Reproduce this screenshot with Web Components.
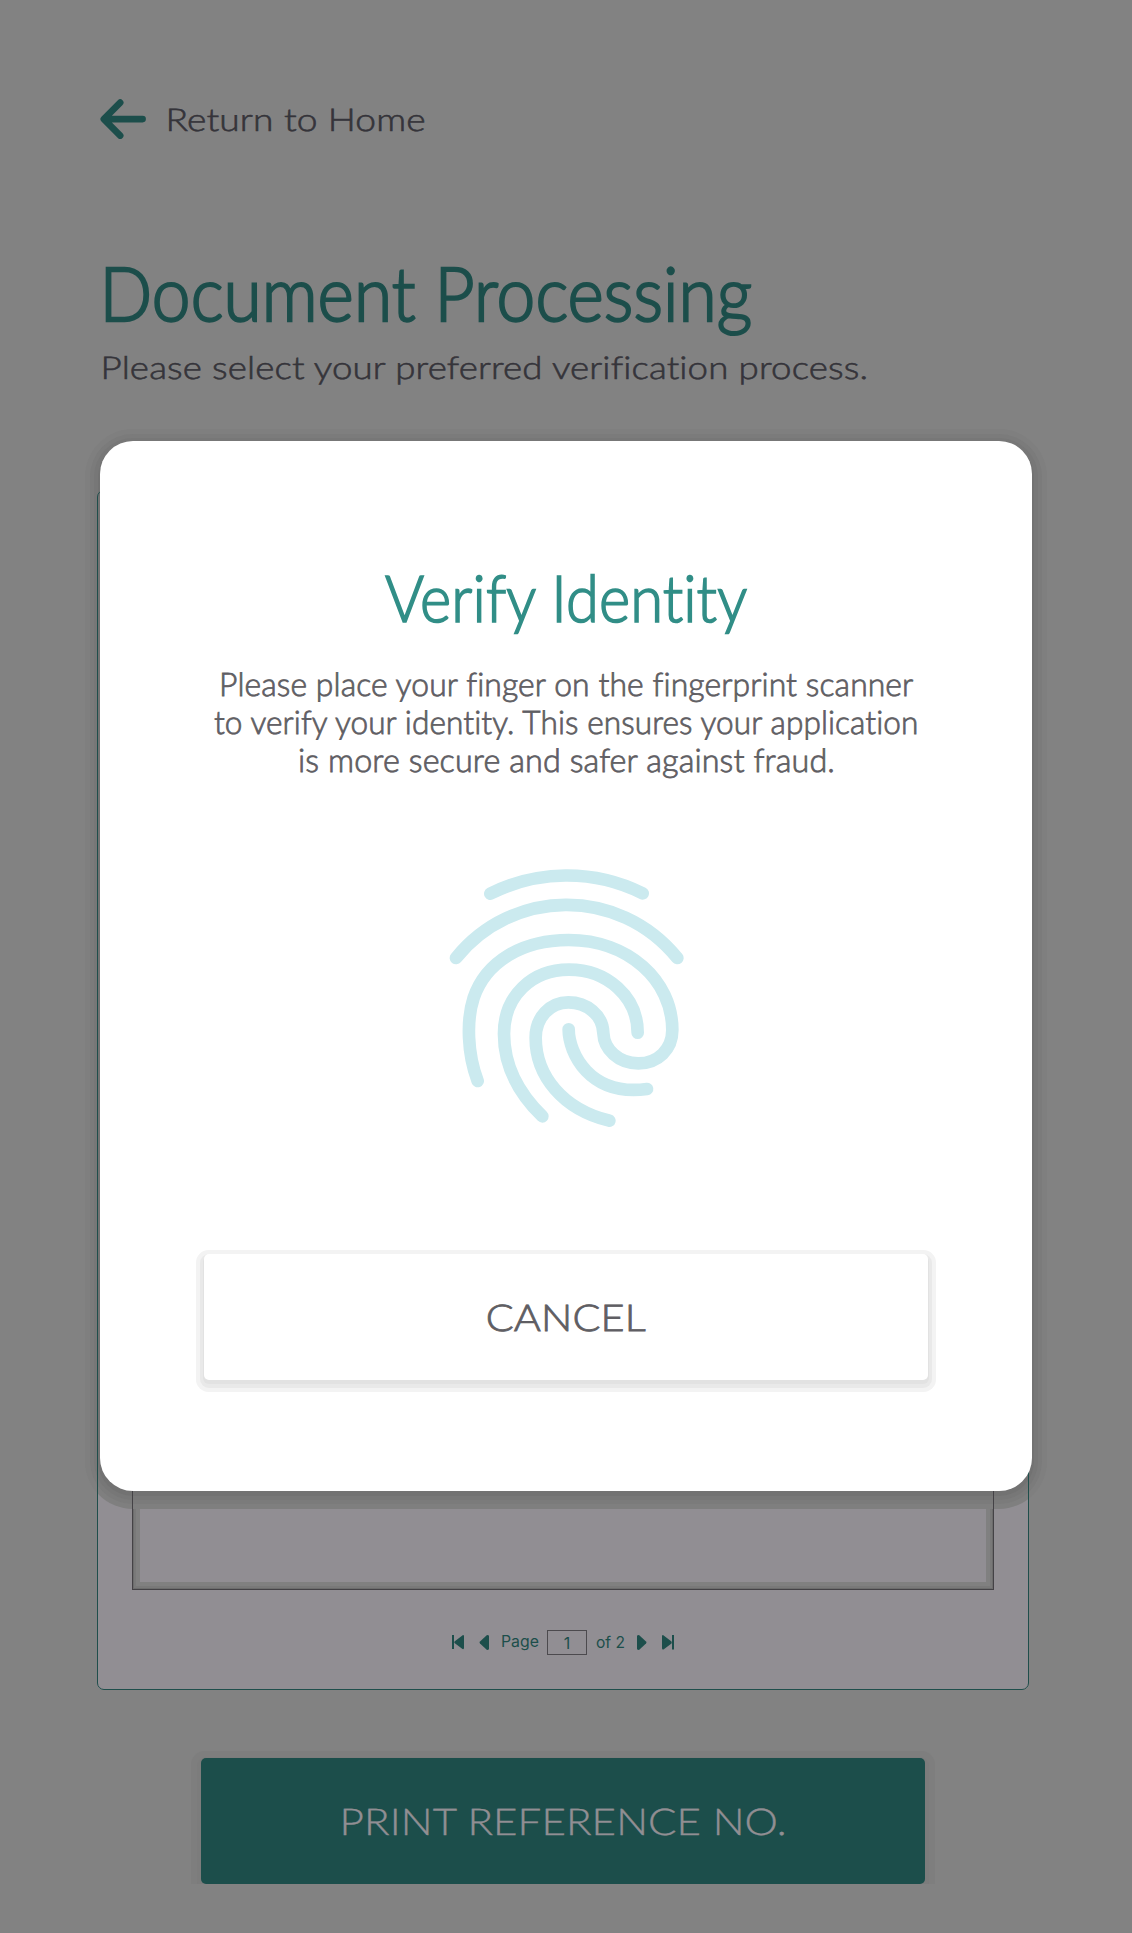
<!DOCTYPE html>
<html lang="en">
<head>
<meta charset="utf-8">
<title>Document Processing</title>
<style>
html,body{margin:0;background:#828282;font-family:Lato,"Open Sans",sans-serif}
</style>
</head>
<body>
<kiosk-page>
  <verify-dialog slot="dialog"></verify-dialog>
</kiosk-page>
<script>
// One line of text whose ink spans exactly the given width.
const canvas = document.createElement('canvas').getContext('2d');
class FitText extends HTMLElement {
  connectedCallback() {
    const w = +this.getAttribute('w'), size = this.getAttribute('size'), stroke = this.getAttribute('stroke') || 0;
    canvas.font = `300 ${size}px Lato`;
    canvas.letterSpacing = '0.1px';
    const m = canvas.measureText(this.textContent);
    const k = w / (m.actualBoundingBoxLeft + m.actualBoundingBoxRight);
    const r = this.attachShadow({mode:'open'});
    r.innerHTML = `<style>
      :host{display:block;width:${w}px;flex:none;font:300 ${size}px/var(--lh,1.2) Lato,sans-serif;letter-spacing:.1px;white-space:nowrap;text-rendering:geometricPrecision;-webkit-text-stroke:${stroke}px currentColor}
      span{display:block;width:max-content;transform-origin:0 50%;transform:translateX(${m.actualBoundingBoxLeft*k}px) scaleX(${k})}
    </style><span><slot></slot></span>`;
  }
}
const define = (name, html) => customElements.define(name, class extends HTMLElement {
  constructor(){ super(); this.attachShadow({mode:'open'}).innerHTML = html; }
});
customElements.define('fit-text', FitText);

define('return-link', `<style>
  :host{display:flex;align-items:center;height:40px;padding-left:100px;color:#35343a;--lh:39px}
  svg{width:46px;height:40px;margin-right:23px}
</style>
<svg viewBox="0 0 46 40" fill="none" stroke="#1c4e4b" stroke-width="6.6" stroke-linecap="round" stroke-linejoin="round"><path d="M20.2 3.6 3.8 20.1 20.2 36.6M4.5 20.1H42.6"/></svg>
<fit-text w="255" size="31.5" stroke=".6">Return to Home</fit-text>`);

define('page-nav', `<style>
  :host{display:flex;height:26px;margin-left:354px;font:16px/26px Inter,sans-serif;color:#1c4e4b;align-items:flex-start}
  svg{display:block;fill:#1c4e4b;height:26px;flex:none}
  .box{box-sizing:border-box;width:40px;height:25px;border:1px solid #4c4a4e;text-align:center;line-height:25px;margin-left:8px}
  .p{width:38px;margin-left:12px;line-height:23px;font-size:15.8px}
  .o{width:30px;margin-left:9px;line-height:26px;font-size:15.6px}
</style>
<svg width="12" viewBox="0 0 12 26"><path d="M0 5h2v14H0zM11 5Q12 5 12 6V18Q12 19.500 10.500 19L2.500 13Q2 12 2.500 11.500Z"/></svg>
<svg width="10" viewBox="0 0 10 26" style="margin-left:15px"><path d="M8 5Q10 5 10 6V18.500Q10 20 8 20L1 13.500Q0 12.500 1 11.500Z"/></svg>
<span class="p">Page</span><span class="box">1</span><span class="o">of 2</span>
<svg width="10" viewBox="0 0 10 26" style="margin-left:11px"><path d="M2 5Q0 5 0 6V18.500Q0 20 2 20L9 13.500Q10 12.500 9 11.500Z"/></svg>
<svg width="12" viewBox="0 0 12 26" style="margin-left:15px"><path d="M10 5h2v14.500H10zM1 5Q0 5 0 6V18Q0 20 1.500 19.500L9.500 13.500Q10 12.500 9.500 11.500Z"/></svg>`);

define('document-panel', `<style>
  :host{display:flex;flex-direction:column;box-sizing:border-box;position:relative;width:932px;height:1200px;padding:1px;margin:103px 0 0 97px;background:#918e93;border-radius:7px}
  :host::after,.doc::after{content:"";position:absolute;inset:0;z-index:2;border:1px solid #1f4e4b;border-radius:7px}
  .doc{position:relative;box-sizing:border-box;width:862px;height:1070px;margin:29px 0 40px 34px;
    box-shadow:inset 0 0 0 2px #6c6c6c,inset 0 0 0 4px #797979,inset 0 0 0 8px #808080}
  .doc::after{border:1px solid #444246;border-radius:0}
</style><div class="doc"></div><page-nav></page-nav>`);

define('kiosk-button', `<style>
  :host{display:flex;box-sizing:border-box;width:724px;height:126px;flex:none;border-radius:5px;align-items:center;--lh:126px}
  :host([kind=print]){margin:68px 0 0 201px;padding-left:142px;background:#1c4e4b;color:#918e93;box-shadow:0 3px 0 4px #7c7c7c,0 3px 0 10px #7e7e7e;clip-path:inset(-8px -11px 0 -11px)}
  :host([kind=cancel]){padding-left:283.500px;background:#fff;color:#5f5e63;box-shadow:0 3px 0 1px #e2e2e2,0 4px 0 4px #e9e9e9,0 4px 0 8px #f3f3f3}
</style><slot></slot>`);

define('finger-print', `<style>:host{display:block}svg{display:block;width:270px;height:290px}</style>
<svg viewBox="0 0 810 870" fill="none" stroke="#cbeaef" stroke-width="38" stroke-linecap="round" stroke-linejoin="round">
<path d="M181 131C320 61 490 56 638 130"/>
<path d="M78 324C245 116 565 107 742 324"/>
<path d="M143 693C112 611 109 510 131 443C168 335 276 270 416 270C595 270 727 391 727 540C727 598 684 640 625 640C565 640 522 598 520 549C518 494 470 457 415 457C360 457 317 502 317 563C317 678 399 778 538 812"/>
<path d="M337 799C261 725 222 640 222 552C222 437 306 359 417 359C532 359 623 441 623 548"/>
<path d="M416 538C416 608 478 740 651 717"/>
</svg>`);

define('verify-dialog', `<style>
  :host{position:absolute;z-index:3;left:100px;top:441px;box-sizing:border-box;width:932px;height:1050px;padding-top:117px;border-radius:33px;background:#fff;display:flex;flex-direction:column}
  .title{margin-left:285px;color:#318e87;--lh:78px}
  .copy{display:flex;flex-direction:column;margin-top:29px;height:114.600px;color:#5f5e63;--lh:38.200px}
  finger-print{margin:70.400px 0 114px 330px}
  kiosk-button{margin-left:104px}
</style>
<fit-text class="title" w="363" size="65" stroke="1.7">Verify Identity</fit-text>
<div class="copy">
<fit-text w="694" size="32.5" stroke=".8" style="margin-left:122px">Please place your finger on the fingerprint scanner</fit-text>
<fit-text w="708" size="32.5" stroke=".8" style="margin-left:114px">to verify your identity. This ensures your application</fit-text>
<fit-text w="534" size="32.5" stroke=".8" style="margin-left:200px">is more secure and safer against fraud.</fit-text>
</div>
<finger-print></finger-print>
<kiosk-button kind="cancel"><fit-text w="158" size="37" stroke=".8">CANCEL</fit-text></kiosk-button>`);

define('kiosk-page', `<style>
  :host{display:flex;flex-direction:column;position:relative;box-sizing:border-box;width:1132px;height:1933px;padding-top:99px;overflow:hidden;background:#828282}
  .title{margin:108px 0 0 106px;color:#1c4e4b;--lh:90px}
  .sub{margin:10px 0 0 103.500px;color:#35343a;--lh:40px}
  .shade{position:absolute;z-index:1;left:100px;top:441px;width:932px;height:1050px;border-radius:33px;
    box-shadow:0 3px 0 2px #727272,0 3px 0 6px #777777,0 3px 0 10px #7b7b7b,0 3px 0 15px #7f7f7f}
</style>
<return-link></return-link>
<fit-text class="title" w="645" size="75" stroke="2.3">Document Processing</fit-text>
<fit-text class="sub" w="765" size="31.5" stroke=".6">Please select your preferred verification process.</fit-text>
<document-panel></document-panel>
<kiosk-button kind="print"><fit-text w="443" size="37" stroke=".4">PRINT REFERENCE NO.</fit-text></kiosk-button>
<div class="shade"></div>
<slot name="dialog"></slot>`);
</script>
</body>
</html>
